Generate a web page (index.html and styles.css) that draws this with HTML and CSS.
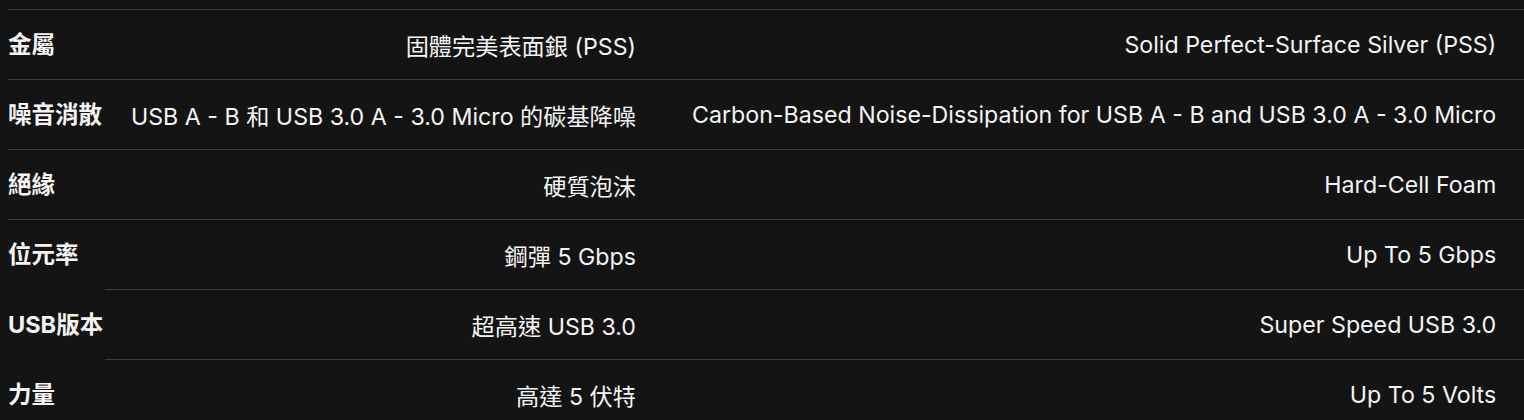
FILE: index.html
```html
<!DOCTYPE html>
<html lang="zh-Hant">
<head>
<meta charset="utf-8">
<link rel="stylesheet" href="styles.css">
</head>
<body>
<div class="specs">
  <div class="row">
    <div class="label">金屬</div>
    <div class="val">固體完美表面銀 (PSS)</div>
    <div class="val">Solid Perfect-Surface Silver (PSS)</div>
  </div>
  <div class="row">
    <div class="label">噪音消散</div>
    <div class="val">USB A - B 和 USB 3.0 A - 3.0 Micro 的碳基降噪</div>
    <div class="val">Carbon-Based Noise-Dissipation for USB A - B and USB 3.0 A - 3.0 Micro</div>
  </div>
  <div class="row">
    <div class="label">絕緣</div>
    <div class="val">硬質泡沫</div>
    <div class="val">Hard-Cell Foam</div>
  </div>
  <div class="row">
    <div class="label">位元率</div>
    <div class="val">鋼彈 5 Gbps</div>
    <div class="val">Up To 5 Gbps</div>
  </div>
  <div class="row">
    <div class="label no-line">USB版本</div>
    <div class="val">超高速 USB 3.0</div>
    <div class="val">Super Speed USB 3.0</div>
  </div>
  <div class="row">
    <div class="label no-line">力量</div>
    <div class="val">高達 5 伏特</div>
    <div class="val">Up To 5 Volts</div>
  </div>
</div>
</body>
</html>
```

FILE: styles.css
```css
html, body {
  background: #141414;
}
body {
  margin: 9px 0 0 8px;
  color: #f4f4f4;
  font-family: "Inter", "Noto Sans CJK TC", sans-serif;
  font-size: 23.2px;
  overflow: hidden;
}
.specs {
  width: 1516px;
  display: grid;
  grid-template-columns: 97px 559px 1fr;
}
.row {
  display: contents;
}
.row > div {
  box-sizing: border-box;
  height: 70px;
  border-top: 1px solid #3a3a3a;
  display: flex;
  align-items: center;
}
.label {
  font-weight: 700;
  font-size: 23.5px;
  white-space: nowrap;
  padding-bottom: 3px;
}
.row > .label.no-line {
  border-top-color: transparent;
}
.val {
  justify-content: flex-end;
  padding: 0 28px;
  white-space: nowrap;
}
```
